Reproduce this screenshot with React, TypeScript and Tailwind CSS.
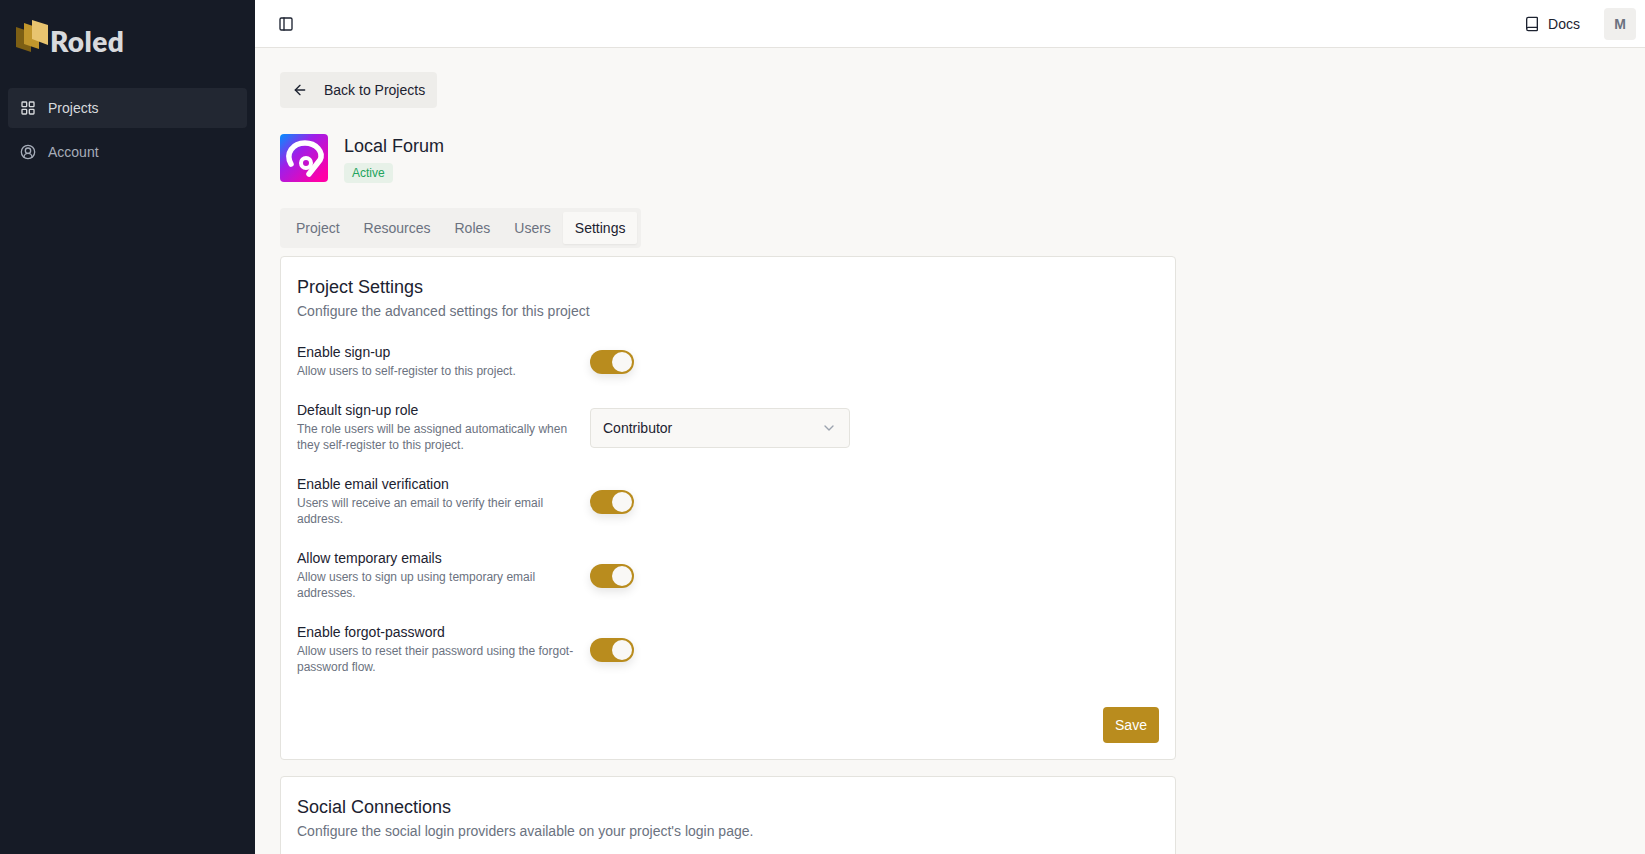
import { ArrowLeft, Book, ChevronDown, CircleUserRound, LayoutGrid, PanelLeft } from "lucide-react";

function Toggle() {
  return (
    <div className="flex h-6 w-11 items-center justify-end rounded-full bg-[#b98c1e] px-0.5 shadow-[0_4px_10px_rgba(0,0,0,0.1)]">
      <div className="h-5 w-5 rounded-full bg-[#f9f8f6]" />
    </div>
  );
}

function Row({ label, desc, children }: { label: string; desc: string; children: React.ReactNode }) {
  return (
    <div className="flex items-center gap-4">
      <div className="w-[277px] shrink-0">
        <div className="mb-px text-sm leading-5 text-[#1c2230]">{label}</div>
        <div className="text-xs leading-4 text-[#6b7280]">{desc}</div>
      </div>
      <div className="pt-[3px]">{children}</div>
    </div>
  );
}

export default function App() {
  return (
    <div className="flex h-screen overflow-hidden bg-[#f9f8f6] font-['Liberation_Sans',Arial,sans-serif]">
      <aside className="flex w-[255px] shrink-0 flex-col bg-[#161b26] px-2">
        <div className="flex h-[88px] items-start gap-[2px] pl-2 pt-5">
          <svg width="33" height="33" viewBox="0 0 33 33" className="shrink-0">
            <polygon points="0,7 15,12 15,32 0,27" fill="#7d5f14" />
            <polygon points="8,3 23,8 23,29 8,24" fill="#c1962c" />
            <polygon points="16,0 32,5 32,25 16,19" fill="#e8c46f" />
          </svg>
          <span className="-ml-px mt-[7px] font-['Lato',sans-serif] text-[28px] font-extrabold leading-7 tracking-[0.4px] text-[#d8dadd]">Roled</span>
        </div>
        <nav className="flex flex-col gap-1">
          <div className="flex h-10 items-center gap-3 rounded bg-[#222732] px-3 text-sm text-[#d8dadd]">
            <LayoutGrid size={16} strokeWidth={2} />
            Projects
          </div>
          <div className="flex h-10 items-center gap-3 rounded px-3 text-sm text-[#a6adb9]">
            <CircleUserRound size={16} strokeWidth={2} />
            Account
          </div>
        </nav>
      </aside>

      <div className="flex min-w-0 flex-1 flex-col">
        <header className="flex h-[48px] shrink-0 items-center justify-between border-b border-[#e5e3df] bg-white pl-[23px] pr-[9px]">
          <PanelLeft size={16} strokeWidth={2} className="text-[#1c2230]" />
          <div className="flex items-center gap-6">
            <div className="flex items-center gap-2 text-sm text-[#1c2230]">
              <Book size={16} strokeWidth={2} />
              Docs
            </div>
            <div className="flex h-8 w-8 items-center justify-center rounded bg-[#f0efed] text-sm font-bold text-[#6b7280]">M</div>
          </div>
        </header>

        <main className="flex-1 pl-[25px] pr-6 pt-6">
          <div className="flex h-9 w-fit items-center gap-4 rounded bg-[#eeedea] px-3 text-sm text-[#1c2230]">
            <ArrowLeft size={16} strokeWidth={2} />
            Back to Projects
          </div>

          <div className="mt-[26px] flex items-start gap-4">
            <div className="h-12 w-12 rounded bg-[linear-gradient(135deg,#0090ff_0%,#a01ee8_38%,#ff00a8_88%)]">
              <svg viewBox="0 0 48 48" className="h-12 w-12">
                <path d="M11 30 C5 19 13 9 25 9 C36 9 44 18 40 26 L29 40" fill="none" stroke="white" strokeWidth="5.5" strokeLinecap="round" strokeLinejoin="round" />
                <circle cx="26" cy="29" r="5" fill="none" stroke="white" strokeWidth="4" />
              </svg>
            </div>
            <div>
              <div className="text-lg leading-6 text-[#1c2230]">Local Forum</div>
              <div className="mt-[5px] w-fit rounded bg-[#e7f1e8] px-2 py-0.5 text-xs leading-4 text-[#22a45d]">Active</div>
            </div>
          </div>

          <div className="mt-[25px] flex h-10 w-fit items-center rounded bg-[#f1f0ee] p-1 text-sm text-[#6b7280]">
            <div className="px-3">Project</div>
            <div className="px-3">Resources</div>
            <div className="px-3">Roles</div>
            <div className="px-3">Users</div>
            <div className="flex h-8 items-center rounded-[2px] bg-[#f9f8f6] px-3 text-[#1c2230] shadow-[0_1px_2px_rgba(0,0,0,0.05)]">Settings</div>
          </div>

          <section className="mt-2 w-[896px] rounded border border-[#e4e3de] bg-white p-4">
            <h2 className="text-lg leading-7 text-[#1c2230]">Project Settings</h2>
            <p className="text-sm leading-5 text-[#6b7280]">Configure the advanced settings for this project</p>
            <div className="mt-[21px] flex flex-col gap-[21px]">
              <Row label="Enable sign-up" desc="Allow users to self-register to this project."><Toggle /></Row>
              <Row label="Default sign-up role" desc="The role users will be assigned automatically when they self-register to this project.">
                <div className="flex h-10 w-[260px] items-center justify-between rounded border border-[#e4e3de] bg-[#f9f8f6] px-3 text-sm text-[#1c2230]">
                  Contributor
                  <ChevronDown size={16} className="text-[#9ca3af]" />
                </div>
              </Row>
              <Row label="Enable email verification" desc="Users will receive an email to verify their email address."><Toggle /></Row>
              <Row label="Allow temporary emails" desc="Allow users to sign up using temporary email addresses."><Toggle /></Row>
              <Row label="Enable forgot-password" desc="Allow users to reset their password using the forgot-password flow."><Toggle /></Row>
            </div>
            <div className="mt-8 flex justify-end">
              <div className="flex h-9 w-14 items-center justify-center rounded bg-[#b98c1e] text-sm text-white">Save</div>
            </div>
          </section>

          <section className="mt-4 h-[200px] w-[896px] rounded border border-[#e4e3de] bg-white p-4">
            <h2 className="text-lg leading-7 text-[#1c2230]">Social Connections</h2>
            <p className="text-sm leading-5 text-[#6b7280]">Configure the social login providers available on your project's login page.</p>
          </section>
        </main>
      </div>
    </div>
  );
}
